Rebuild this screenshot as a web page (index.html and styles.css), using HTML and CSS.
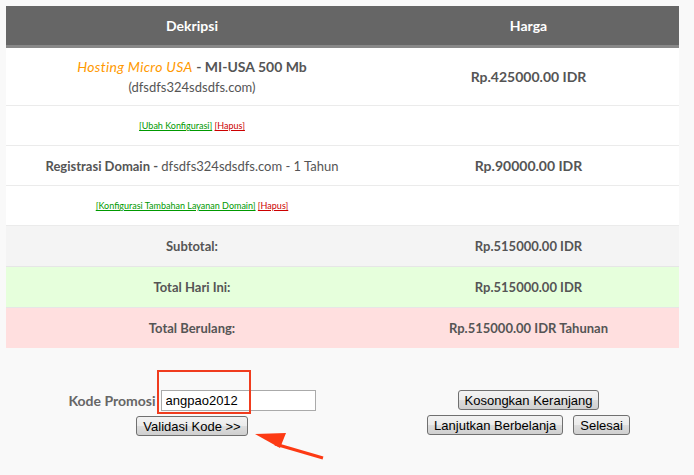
FILE: index.html
```html
<!DOCTYPE html>
<html lang="id">
<head>
    <meta charset="UTF-8">
    <title>Keranjang Belanja</title>
    <link rel="stylesheet" href="styles.css">
</head>
<body>

<div class="page">
    <table class="cart">
        <tr>
            <th class="col-desc">Dekripsi</th>
            <th class="col-price">Harga</th>
        </tr>
        <tr class="item">
            <td>
                <span class="title"><span class="product">Hosting Micro USA</span> <strong>- MI-USA 500 Mb</strong></span><br>
                (dfsdfs324sdsdfs.com)
            </td>
            <td class="price">Rp.425000.00 IDR</td>
        </tr>
        <tr class="links">
            <td><a href="#" class="edit">[Ubah Konfigurasi]</a> <a href="#" class="del">[Hapus]</a></td>
            <td></td>
        </tr>
        <tr class="item domain">
            <td><strong>Registrasi Domain -</strong> dfsdfs324sdsdfs.com - 1 Tahun</td>
            <td class="price">Rp.90000.00 IDR</td>
        </tr>
        <tr class="links">
            <td><a href="#" class="edit">[Konfigurasi Tambahan Layanan Domain]</a> <a href="#" class="del">[Hapus]</a></td>
            <td></td>
        </tr>
        <tr class="total subtotal">
            <td>Subtotal:</td>
            <td>Rp.515000.00 IDR</td>
        </tr>
        <tr class="total today">
            <td>Total Hari Ini:</td>
            <td>Rp.515000.00 IDR</td>
        </tr>
        <tr class="total recurring">
            <td>Total Berulang:</td>
            <td>Rp.515000.00 IDR Tahunan</td>
        </tr>
    </table>

    <div class="actions">
        <div class="promo">
            <div class="line">
                <label for="promocode">Kode Promosi</label>
                <input type="text" id="promocode" value="angpao2012">
            </div>
            <div class="line">
                <button>Validasi Kode &gt;&gt;</button>
            </div>
        </div>
        <div class="buttons">
            <div class="line">
                <button>Kosongkan Keranjang</button>
            </div>
            <div class="line">
                <button>Lanjutkan Berbelanja</button>
                <button>Selesai</button>
            </div>
        </div>
    </div>

    <!-- anotasi screenshot -->
    <div class="mark"></div>
    <svg class="arrow" width="90" height="30" viewBox="0 0 90 30">
        <line x1="22" y1="12" x2="70" y2="26" stroke="#fd3a14" stroke-width="3"/>
        <polygon points="2,2 33,1 27,16" fill="#fd3a14"/>
    </svg>
</div>

</body>
</html>
```

FILE: styles.css
```css
body {
    margin: 0;
    background-color: #f9f9f9;
    font-family: 'Lato', 'Open Sans', sans-serif;
    color: #555;
}
.page {
    position: relative;
    padding: 6px;
    height: 463px;
}
.cart {
    width: 673px;
    border-collapse: collapse;
    font-size: 13px;
}
.cart th {
    background-color: #666;
    color: #fff;
    height: 39px;
    border-bottom: 3px solid #888;
    font-size: 14px;
    font-weight: bold;
    padding: 0;
}
.col-desc {
    width: 372px;
}
.cart td {
    text-align: center;
    padding: 0;
    border-bottom: 1px solid #ebebeb;
    background-color: #fff;
}
.item td {
    height: 57px;
    line-height: 20px;
}
.item strong, .price, .total td {
    font-weight: bold;
}
.title {
    font-size: 14px;
}
.product {
    color: #ff9900;
    font-style: italic;
    letter-spacing: 0.3px;
}
.price {
    font-size: 14px;
}
.domain td {
    height: 39px;
}
.links td {
    height: 39px;
    font-size: 9px;
}
.links a {
    text-decoration: underline;
}
.links a.edit {
    color: #009900;
}
.links a.del {
    color: #cc0000;
}
.total td {
    height: 40px;
    font-size: 13px;
}
.subtotal td {
    background-color: #f4f4f4;
    border-bottom: 1px solid #e6e6e6;
}
.today td {
    background-color: #e6ffdc;
    border-bottom: 1px solid #e6e6e6;
}
.recurring td {
    background-color: #ffdfdf;
    border-bottom: none;
}
.actions {
    display: flex;
    width: 673px;
    padding-top: 42px;
}
.promo {
    width: 372px;
}
.buttons {
    width: 301px;
}
.line {
    display: flex;
    justify-content: center;
    align-items: center;
    gap: 10px;
    margin-bottom: 5px;
}
.promo .line {
    gap: 5px;
}
.promo label {
    font-weight: bold;
    font-size: 14px;
    color: #666;
}
.promo input {
    width: 155px;
    height: 21px;
    box-sizing: border-box;
    border: 1px solid #aaa;
    background-color: #fff;
    font-family: 'Liberation Sans', Arial, sans-serif;
    font-size: 13px;
    padding: 0 4px;
    color: #000;
}
button {
    font-family: 'Liberation Sans', Arial, sans-serif;
    font-size: 13px;
    color: #000;
    height: 20px;
    padding: 0 6px;
    border: 1px solid #707070;
    border-radius: 3px;
    background: linear-gradient(#f2f2f2, #ebebeb 50%, #dddddd 51%, #cfcfcf);
}
.mark {
    position: absolute;
    left: 157px;
    top: 370px;
    width: 90px;
    height: 40px;
    border: 2px solid #f03c1e;
}
.arrow {
    position: absolute;
    left: 253px;
    top: 432px;
}
```
